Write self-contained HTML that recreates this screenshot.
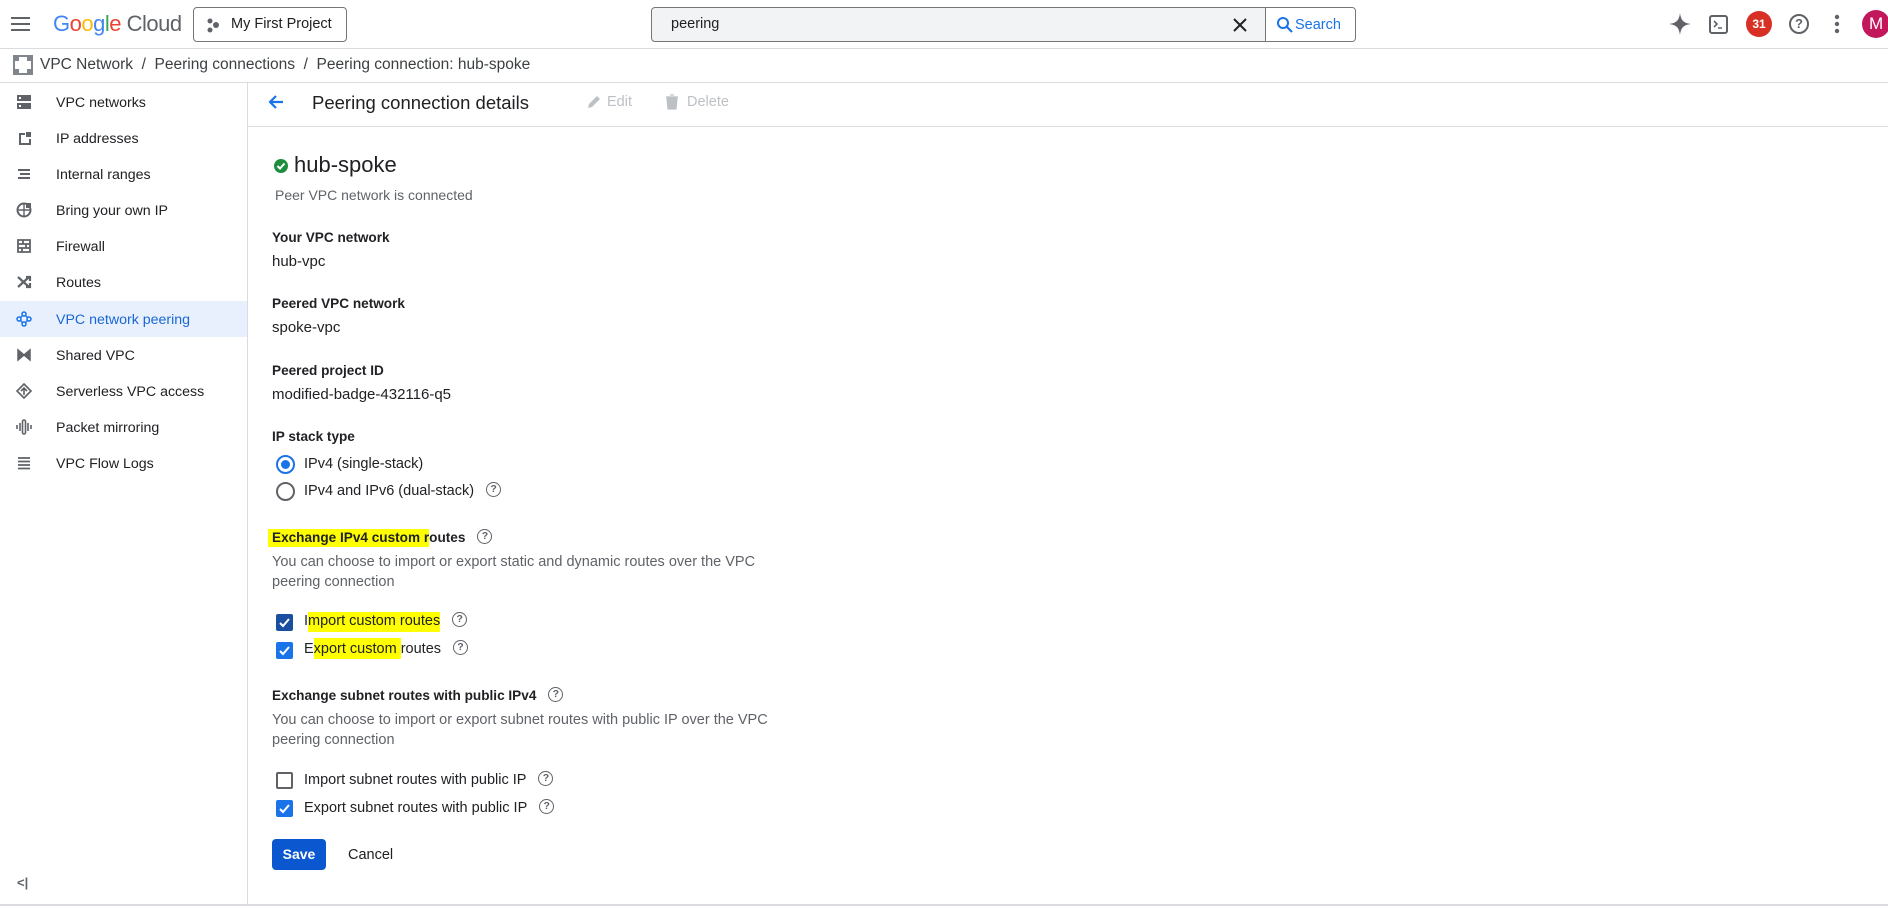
<!DOCTYPE html>
<html><head><meta charset="utf-8"><style>
*{margin:0;padding:0;box-sizing:border-box}
body{width:1888px;height:908px;overflow:hidden;background:#fff;font-family:"Liberation Sans",Arial,sans-serif;color:#202124;position:relative}
.a{position:absolute;white-space:nowrap}
.lbl{font-size:13.6px;font-weight:bold;color:#202124}
.val{font-size:15px;color:#202124}
.opt{font-size:14.5px;color:#202124}
.desc{font-size:14.5px;color:#5f6368}
.nav{position:absolute;left:0;width:247px;height:36px;font-size:14.2px;color:#202124}
.nav span{position:absolute;left:56px;top:11px}
.nav svg{position:absolute;left:15px;top:9px}
.help{display:inline-block;vertical-align:middle;margin-left:12px;margin-top:-3px;width:15px;height:15px;border:1.5px solid #5f6368;border-radius:50%;font-size:10.5px;line-height:12px;text-align:center;color:#5f6368;font-weight:bold}
.cb{position:absolute;width:17px;height:17px;border-radius:2px;background:#1a73e8}
.cb svg{position:absolute;left:1px;top:1px}
.hl{background:#ffff00}
</style></head><body>
<!-- header -->
<div class="a" style="left:0;top:0;width:1888px;height:49px;border-bottom:1px solid #dadce0"></div>
<svg class="a" style="left:10px;top:14px" width="22" height="20" viewBox="0 0 22 20"><rect x="1" y="3" width="19" height="2" fill="#5f6368"/><rect x="1" y="9" width="19" height="2" fill="#5f6368"/><rect x="1" y="15" width="19" height="2" fill="#5f6368"/></svg>
<div class="a" style="left:53px;top:11px;font-size:22px;letter-spacing:-0.5px"><span style="color:#4285f4">G</span><span style="color:#ea4335">o</span><span style="color:#fbbc04">o</span><span style="color:#4285f4">g</span><span style="color:#34a853">l</span><span style="color:#ea4335">e</span> <span style="color:#5f6368">Cloud</span></div>
<div class="a" style="left:193px;top:7px;width:154px;height:35px;border:1px solid #747775;border-radius:4px"></div>
<svg class="a" style="left:205px;top:17px" width="16" height="16"><circle cx="5" cy="4" r="2.5" fill="#5f6368"/><circle cx="11" cy="8" r="3" fill="#5f6368"/><circle cx="5" cy="13" r="2.5" fill="#5f6368"/></svg>
<div class="a" style="left:231px;top:16px;font-size:14.5px">My First Project</div>
<div class="a" style="left:651px;top:7px;width:705px;height:35px;border:1px solid #747775;border-radius:4px;background:#f1f3f4"></div>
<div class="a" style="left:1265px;top:8px;width:90px;height:33px;background:#fff;border-left:1px solid #747775;border-radius:0 3px 3px 0"></div>
<div class="a" style="left:671px;top:16px;font-size:14.5px">peering</div>
<svg class="a" style="left:1233px;top:18px" width="14" height="14"><path d="M1 1L13 13M13 1L1 13" stroke="#202124" stroke-width="2"/></svg>
<svg class="a" style="left:1276px;top:16px" width="17" height="17"><circle cx="7" cy="7" r="5" fill="none" stroke="#1a73e8" stroke-width="2"/><path d="M11 11L16 16" stroke="#1a73e8" stroke-width="2.2"/></svg>
<div class="a" style="left:1295px;top:17px;font-size:14.5px;color:#1a73e8">Search</div>
<svg class="a" style="left:1668px;top:12px" width="24" height="24"><path d="M12 1C13 8 15 11 23 12C15 13 13 16 12 23C11 16 9 13 1 12C9 11 11 8 12 1Z" fill="#5f6368"/></svg>
<svg class="a" style="left:1709px;top:15px" width="19" height="19"><rect x="1" y="1" width="17" height="17" rx="2" fill="none" stroke="#5f6368" stroke-width="2"/><path d="M5 6L8 9L5 12M9 13H13" stroke="#5f6368" stroke-width="1.6" fill="none"/></svg>
<div class="a" style="left:1746px;top:11px;width:26px;height:26px;border-radius:50%;background:#d93025;color:#fff;font-size:12px;font-weight:bold;text-align:center;line-height:26px">31</div>
<div class="a" style="left:1789px;top:14px;width:20px;height:20px;border:2px solid #5f6368;border-radius:50%;font-size:13px;text-align:center;line-height:16px;color:#5f6368;font-weight:bold">?</div>
<svg class="a" style="left:1834px;top:14px" width="6" height="20"><circle cx="3" cy="3" r="2.2" fill="#5f6368"/><circle cx="3" cy="10" r="2.2" fill="#5f6368"/><circle cx="3" cy="17" r="2.2" fill="#5f6368"/></svg>
<div class="a" style="left:1862px;top:10px;width:28px;height:28px;border-radius:50%;background:#c2185b;color:#fff;font-size:17px;line-height:28px;padding-left:7px">M</div>
<!-- breadcrumb -->
<div class="a" style="left:0;top:82px;width:1888px;border-top:1px solid #dadce0"></div>
<svg class="a" style="left:13px;top:55px" width="20" height="20"><rect x="1" y="1" width="18" height="18" fill="none" stroke="#80868b" stroke-width="2"/><rect x="0" y="0" width="6" height="6" fill="#80868b"/><rect x="14" y="0" width="6" height="6" fill="#80868b"/><rect x="0" y="14" width="6" height="6" fill="#80868b"/><rect x="14" y="14" width="6" height="6" fill="#80868b"/></svg>
<div class="a" style="left:40px;top:56px;font-size:15.5px;color:#3c4043">VPC Network &nbsp;/&nbsp; Peering connections &nbsp;/&nbsp; Peering connection: hub-spoke</div>
<!-- sidebar -->
<div class="a" style="left:247px;top:83px;height:822px;border-left:1px solid #dadce0"></div>
<div class="nav" style="top:84px"><svg width="18" height="18"><rect x="2" y="2" width="14" height="6" fill="#5f6368"/><rect x="2" y="10" width="14" height="6" fill="#5f6368"/><rect x="4" y="4" width="2" height="2" fill="#fff"/><rect x="4" y="12" width="2" height="2" fill="#fff"/></svg><span>VPC networks</span></div>
<div class="nav" style="top:120px"><svg width="18" height="18"><path d="M4 4H10V6H6V14H14V10H16V16H4Z" fill="#5f6368"/><rect x="11" y="3" width="5" height="5" fill="#5f6368"/></svg><span>IP addresses</span></div>
<div class="nav" style="top:156px"><svg width="18" height="18"><rect x="3" y="4" width="12" height="2" fill="#5f6368"/><rect x="5" y="8" width="10" height="2" fill="#5f6368"/><rect x="3" y="12" width="12" height="2" fill="#5f6368"/></svg><span>Internal ranges</span></div>
<div class="nav" style="top:192px"><svg width="18" height="18"><circle cx="9" cy="9" r="6.5" fill="none" stroke="#5f6368" stroke-width="2"/><path d="M2 9H16M9 2V16" stroke="#5f6368" stroke-width="1.4"/><rect x="11" y="2" width="5" height="5" fill="#5f6368"/></svg><span>Bring your own IP</span></div>
<div class="nav" style="top:228px"><svg width="18" height="18"><path d="M3 3H15V15H3Z M3 7H15M3 11H15M8 3V7M11 7V11M7 11V15" stroke="#5f6368" stroke-width="1.8" fill="none"/></svg><span>Firewall</span></div>
<div class="nav" style="top:264px"><svg width="18" height="18"><path d="M3 4L14 14M3 14L14 4M11 4H15V8M11 14H15V10" stroke="#5f6368" stroke-width="2.2" fill="none"/></svg><span>Routes</span></div>
<div class="nav" style="top:301px;background:#e8f0fe;color:#1967d2"><svg width="18" height="18"><path d="M4 9L9 4L14 9L9 14Z" fill="none" stroke="#1a73e8" stroke-width="1.5"/><circle cx="4" cy="9" r="2" fill="#e8f0fe" stroke="#1a73e8" stroke-width="1.5"/><circle cx="9" cy="4" r="2" fill="#e8f0fe" stroke="#1a73e8" stroke-width="1.5"/><circle cx="14" cy="9" r="2" fill="#e8f0fe" stroke="#1a73e8" stroke-width="1.5"/><circle cx="9" cy="14" r="2" fill="#e8f0fe" stroke="#1a73e8" stroke-width="1.5"/></svg><span>VPC network peering</span></div>
<div class="nav" style="top:337px"><svg width="18" height="18"><path d="M3 4L9 9L3 14ZM15 4L9 9L15 14Z" fill="#5f6368" stroke="#5f6368" stroke-width="1.5"/></svg><span>Shared VPC</span></div>
<div class="nav" style="top:373px"><svg width="18" height="18"><path d="M9 2L16 9L9 16L2 9Z" fill="none" stroke="#5f6368" stroke-width="1.6"/><path d="M9 6V13M6 9L9 6L12 9" stroke="#5f6368" stroke-width="1.6" fill="none"/></svg><span>Serverless VPC access</span></div>
<div class="nav" style="top:409px"><svg width="18" height="18"><path d="M2 7V11M5 5V13M13 5V13M16 7V11" stroke="#5f6368" stroke-width="1.6"/><rect x="7.5" y="2" width="3" height="14" rx="1.5" fill="none" stroke="#5f6368" stroke-width="1.6"/></svg><span>Packet mirroring</span></div>
<div class="nav" style="top:445px"><svg width="18" height="18"><path d="M3 4H15M3 7.5H15M3 11H15M3 14.5H15" stroke="#5f6368" stroke-width="1.8"/></svg><span>VPC Flow Logs</span></div>
<div class="a" style="left:17px;top:875px;font-size:13px;color:#5f6368;font-weight:bold">&lt;|</div>
<!-- content header -->
<div class="a" style="left:248px;top:126px;width:1640px;border-top:1px solid #dadce0"></div>
<svg class="a" style="left:267px;top:93px" width="18" height="18"><path d="M16 9H3M9 3L3 9L9 15" stroke="#1a73e8" stroke-width="2.2" fill="none"/></svg>
<div class="a" style="left:312px;top:92px;font-size:18.5px;color:#202124">Peering connection details</div>
<svg class="a" style="left:586px;top:94px" width="16" height="16"><path d="M2 14L3 10L11 2L14 5L6 13Z" fill="#bdc1c6"/></svg>
<div class="a" style="left:607px;top:94px;font-size:14.5px;color:#bdc1c6">Edit</div>
<svg class="a" style="left:665px;top:94px" width="14" height="16"><path d="M1 3H13M5 1H9M2 4H12L11 15H3Z" fill="#bdc1c6" stroke="#bdc1c6" stroke-width="1.2"/></svg>
<div class="a" style="left:687px;top:94px;font-size:14.5px;color:#bdc1c6">Delete</div>
<!-- body -->
<svg class="a" style="left:273px;top:158px" width="16" height="16"><circle cx="8" cy="8" r="7" fill="#1e8e3e"/><path d="M4.5 8L7 10.5L11.5 5.5" stroke="#fff" stroke-width="2" fill="none"/></svg>
<div class="a" style="left:294px;top:152px;font-size:22px">hub-spoke</div>
<div class="a desc" style="left:275px;top:187px;font-size:14px">Peer VPC network is connected</div>
<div class="a lbl" style="left:272px;top:230px">Your VPC network</div>
<div class="a val" style="left:272px;top:253px">hub-vpc</div>
<div class="a lbl" style="left:272px;top:296px">Peered VPC network</div>
<div class="a val" style="left:272px;top:319px">spoke-vpc</div>
<div class="a lbl" style="left:272px;top:363px">Peered project ID</div>
<div class="a val" style="left:272px;top:386px">modified-badge-432116-q5</div>
<div class="a lbl" style="left:272px;top:429px">IP stack type</div>
<div class="a" style="left:276px;top:455px;width:19px;height:19px;border:2px solid #1a73e8;border-radius:50%"></div>
<div class="a" style="left:281px;top:460px;width:9px;height:9px;background:#1a73e8;border-radius:50%"></div>
<div class="a opt" style="left:304px;top:456px">IPv4 (single-stack)</div>
<div class="a" style="left:276px;top:482px;width:19px;height:19px;border:2px solid #5f6368;border-radius:50%"></div>
<div class="a opt" style="left:304px;top:483px">IPv4 and IPv6 (dual-stack)<span class="help">?</span></div>

<div class="a lbl" style="left:268px;top:530px"><span class="hl" style="padding:1px 0 2px 4px">Exchange IPv4 custom r</span>outes<span class="help">?</span></div>
<div class="a desc" style="left:272px;top:554px">You can choose to import or export static and dynamic routes over the VPC</div>
<div class="a desc" style="left:272px;top:574px">peering connection</div>

<div class="cb" style="left:276px;top:614px;background:#1a4fa0"><svg width="15" height="15"><path d="M3 8L6 11L12 4" stroke="#fff" stroke-width="2" fill="none"/></svg></div>
<div class="a opt" style="left:304px;top:613px">I<span class="hl" style="padding:1px 0 3px">mport custom routes</span><span class="help">?</span></div>
<div class="cb" style="left:276px;top:642px"><svg width="15" height="15"><path d="M3 8L6 11L12 4" stroke="#fff" stroke-width="2" fill="none"/></svg></div>
<div class="a opt" style="left:304px;top:641px">E<span class="hl" style="padding:3px 0 2px">xport custom </span>routes<span class="help">?</span></div>

<div class="a lbl" style="left:272px;top:688px">Exchange subnet routes with public IPv4<span class="help">?</span></div>
<div class="a desc" style="left:272px;top:712px">You can choose to import or export subnet routes with public IP over the VPC</div>
<div class="a desc" style="left:272px;top:732px">peering connection</div>
<div class="a" style="left:276px;top:772px;width:17px;height:17px;border:2px solid #5f6368;border-radius:2px"></div>
<div class="a opt" style="left:304px;top:772px">Import subnet routes with public IP<span class="help">?</span></div>
<div class="cb" style="left:276px;top:800px"><svg width="15" height="15"><path d="M3 8L6 11L12 4" stroke="#fff" stroke-width="2" fill="none"/></svg></div>
<div class="a opt" style="left:304px;top:800px">Export subnet routes with public IP<span class="help">?</span></div>

<div class="a" style="left:272px;top:839px;width:54px;height:31px;background:#0b57d0;border-radius:4px;color:#fff;font-size:14px;font-weight:bold;text-align:center;line-height:31px">Save</div>
<div class="a" style="left:348px;top:847px;font-size:14.5px;color:#202124">Cancel</div>
<div class="a" style="left:0;top:904px;width:1888px;border-top:2px solid #dadce0"></div>
</body></html>
